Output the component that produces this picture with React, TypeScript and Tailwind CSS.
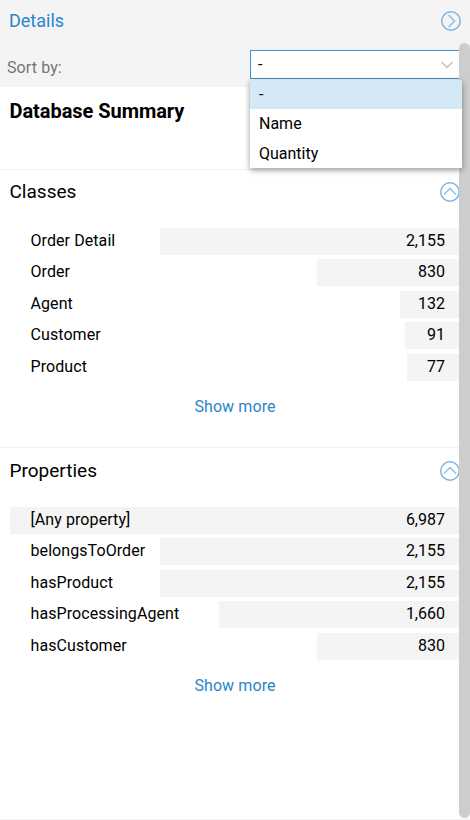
import { ChevronDown } from "lucide-react";

const classes = [
  { name: "Order Detail", value: "2,155", width: 299 },
  { name: "Order", value: "830", width: 142 },
  { name: "Agent", value: "132", width: 59 },
  { name: "Customer", value: "91", width: 54 },
  { name: "Product", value: "77", width: 52 },
];

const properties = [
  { name: "[Any property]", value: "6,987", width: 449 },
  { name: "belongsToOrder", value: "2,155", width: 299 },
  { name: "hasProduct", value: "2,155", width: 299 },
  { name: "hasProcessingAgent", value: "1,660", width: 240 },
  { name: "hasCustomer", value: "830", width: 142 },
];

type Row = { name: string; value: string; width: number };

function CircleChevron({ up }: { up?: boolean }) {
  return (
    <svg width="22" height="22" viewBox="0 0 22 22" fill="none">
      <circle cx="11" cy="11" r="9.25" stroke="#7db4e0" strokeWidth="1.5" />
      <path
        d={up ? "M5 13.5 L11 7.5 L17 13.5" : "M8.5 5 L14.5 11 L8.5 17"}
        stroke="#8fc0e8"
        strokeWidth="1.5"
      />
    </svg>
  );
}

function Section({ title, rows, headerHeight, rowsTop }: { title: string; rows: Row[]; headerHeight: string; rowsTop: string }) {
  return (
    <section className="h-[278px] border-t border-[#f0f0f0]">
      <div className={`flex items-center justify-between pl-[9.5px] pr-[9px] ${headerHeight}`}>
        <h2 className="text-[19px] text-black">{title}</h2>
        <CircleChevron up />
      </div>
      <div className={`flex flex-col gap-[4.4px] ${rowsTop}`}>
        {rows.map((row) => (
          <div key={row.name} className="relative ml-[10px] mr-[11px] flex h-[27px] items-center justify-between pb-[1px] pl-[20.5px] pr-[14px] text-[16px] text-black">
            <div className="absolute inset-y-0 right-0 bg-[#f4f4f4]" style={{ width: row.width }} />
            <span className="relative tracking-[0.08px]">{row.name}</span>
            <span className="relative">{row.value}</span>
          </div>
        ))}
      </div>
      <div className="mt-[14.5px] text-center text-[16px] tracking-[0.1px] text-[#2b85c7]">Show more</div>
    </section>
  );
}

export default function App() {
  return (
    <div className="relative h-[820px] w-[470px] overflow-hidden bg-white font-['Roboto',sans-serif]">
      <header className="h-[87px] bg-[#f4f4f4]">
        <div className="flex h-[42px] items-center justify-between pl-[9px] pr-[8px]">
          <span className="pb-[2px] text-[18px] text-[#2b85d0]">Details</span>
          <CircleChevron />
        </div>
        <div className="mt-[8px] flex h-[29px] items-center justify-between pl-[7px] pr-[10px]">
          <span className="mt-[6px] text-[16px] tracking-[0.1px] text-[#757575]">Sort by:</span>
          <div className="flex h-[29px] w-[210px] items-center justify-between border border-[#3b92d6] bg-white pl-[7px] pr-[2px] text-[16px] text-black">
            <span>-</span>
            <ChevronDown size={20} className="text-[#c4c4c4]" />
          </div>
        </div>
      </header>

      <div className="flex h-[82px] items-start pl-[9.5px] pt-[9px]">
        <h1 className="text-[20px] font-bold tracking-[-0.05px] text-black">Database Summary</h1>
      </div>

      <Section title="Classes" rows={classes} headerHeight="h-[44px]" rowsTop="mt-[14px]" />
      <Section title="Properties" rows={properties} headerHeight="h-[46px]" rowsTop="mt-[13px]" />

      <div className="absolute bottom-0 left-0 right-0 border-t border-[#f0f0f0]" />

      <div className="absolute left-[459px] top-[43px] h-[775px] w-[11px] rounded-[6px] bg-[#cdcdcd]" />

      <div className="absolute left-[250px] top-[80px] w-[212px] bg-white text-[16px] text-black shadow-[0_2px_6px_rgba(0,0,0,0.4)]">
        <div className="flex h-[29px] items-center bg-[#d5e8f6] pl-[9px]">-</div>
        <div className="flex h-[30px] items-center pl-[9px]">Name</div>
        <div className="flex h-[29px] items-center pl-[9px]">Quantity</div>
      </div>
    </div>
  );
}
